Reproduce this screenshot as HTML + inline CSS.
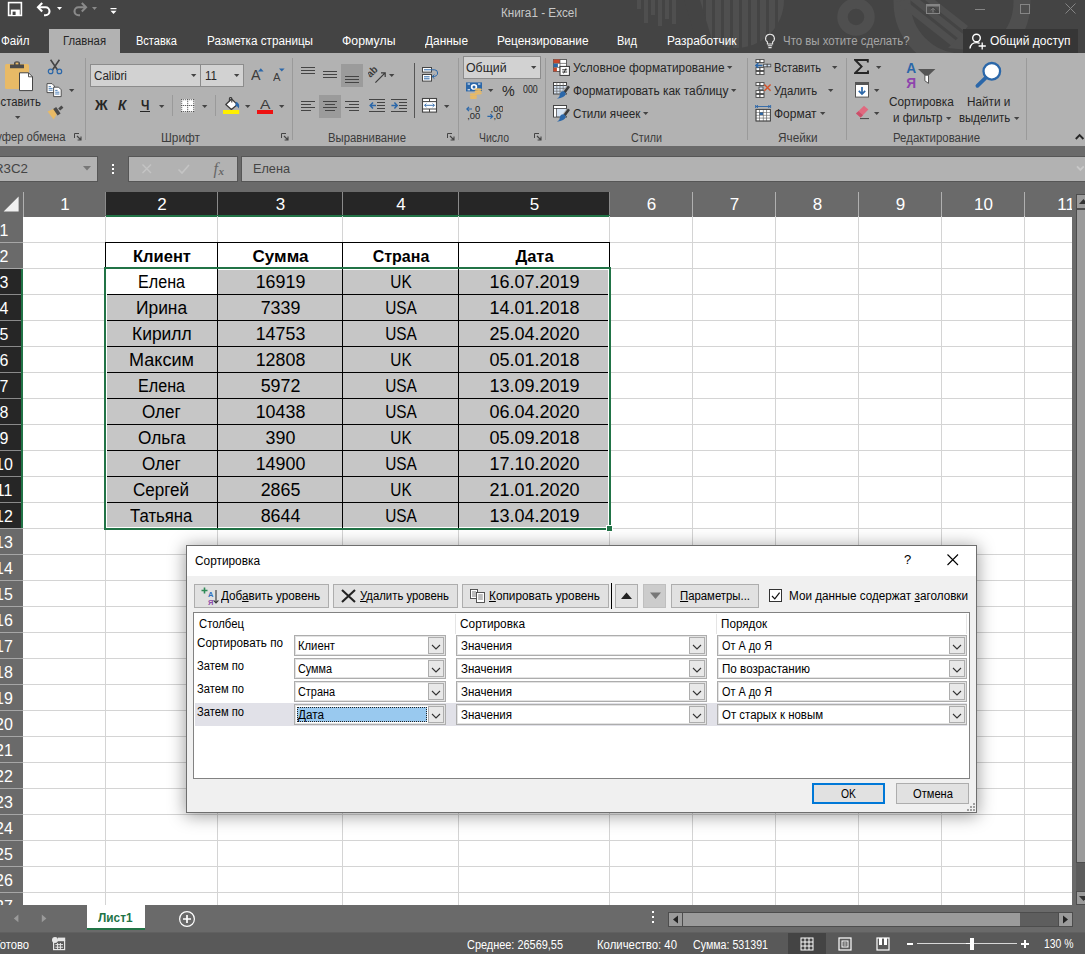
<!DOCTYPE html>
<html lang="ru"><head><meta charset="utf-8"><title>Книга1 - Excel</title>
<style>
html,body{margin:0;padding:0;}
body{width:1085px;height:954px;overflow:hidden;position:relative;background:#fff;font-family:"Liberation Sans",sans-serif;font-size:12px;}
#app{position:absolute;left:0;top:0;width:1085px;height:954px;overflow:hidden;}
#app div,#app span.t,#app svg{position:absolute;}
span.t{white-space:nowrap;display:block;}
u{text-decoration:underline;text-underline-offset:1px;}
</style></head><body><div id="app">
<div style="left:0px;top:0px;width:1085px;height:53px;background:#444444;"></div>
<svg style="left:0px;top:0px;" width="1085" height="53" viewBox="0 0 1085 53"><g fill="none" stroke="#4f4f4f">
<circle cx="856" cy="17" r="13.5" stroke-width="10.5"/>
<circle cx="962" cy="2" r="60" stroke-width="17"/>
</g>
<g fill="#4f4f4f">
<rect x="637" y="0" width="4" height="9"/><rect x="644" y="0" width="4" height="23"/><rect x="651" y="0" width="4" height="15"/><rect x="658" y="0" width="4" height="26"/><rect x="665" y="0" width="4" height="19"/><rect x="672" y="0" width="4" height="24"/>
<path d="M688 0 A48 48 0 0 0 784 0 Z"/>
<path d="M905 0 L958 42 L953 47 L896 2 Z M920 0 L963 34 L959 39 L910 0 Z M935 0 L968 26 L964 31 L925 0 Z"/>
<path d="M948 48 L966 30 L968 50 Z"/>
</g><rect x="694" y="0" width="3" height="53" fill="#444"/><rect x="703" y="0" width="3" height="53" fill="#444"/><rect x="712" y="0" width="3" height="53" fill="#444"/><rect x="721" y="0" width="3" height="53" fill="#444"/><rect x="730" y="0" width="3" height="53" fill="#444"/><rect x="739" y="0" width="3" height="53" fill="#444"/><rect x="748" y="0" width="3" height="53" fill="#444"/><rect x="757" y="0" width="3" height="53" fill="#444"/><rect x="766" y="0" width="3" height="53" fill="#444"/><rect x="775" y="0" width="3" height="53" fill="#444"/><path d="M684 0 L700 0 L716 53 L700 53 Z" fill="#444"/></svg>
<svg style="left:7px;top:1px;" width="16" height="16" viewBox="0 0 16 16"><rect x="1.6" y="1.6" width="12.8" height="12.8" fill="none" stroke="#fff" stroke-width="1.6"/><rect x="3.8" y="8.6" width="9" height="6" fill="#fff"/><rect x="5.6" y="10.6" width="3" height="3.4" fill="#444"/></svg>
<svg style="left:36px;top:2px;" width="20" height="16" viewBox="0 0 20 16"><path d="M2 5.2 H9.5 A4 4 0 0 1 9.5 13.2 H8" fill="none" stroke="#fff" stroke-width="2.1"/><path d="M6.2 1 L2 5.2 L6.2 9.4" fill="none" stroke="#fff" stroke-width="2.1"/></svg>
<svg style="left:57px;top:7px;" width="6" height="4" viewBox="0 0 6 4"><path d="M0 0 H5 L2.5 3 Z" fill="#fff"/></svg>
<svg style="left:70px;top:2px;" width="20" height="16" viewBox="0 0 20 16"><path d="M16 5.2 H8.5 A4 4 0 0 0 8.5 13.2 H10" fill="none" stroke="#8a8a8a" stroke-width="2.1"/><path d="M11.8 1 L16 5.2 L11.8 9.4" fill="none" stroke="#8a8a8a" stroke-width="2.1"/></svg>
<svg style="left:92px;top:7px;" width="6" height="4" viewBox="0 0 6 4"><path d="M0 0 H5 L2.5 3 Z" fill="#8a8a8a"/></svg>
<svg style="left:110px;top:7px;" width="8" height="8" viewBox="0 0 8 8"><rect x="0.5" y="1" width="6" height="1.2" fill="#fff"/><path d="M0.5 3.8 H6.5 L3.5 7 Z" fill="#fff"/></svg>
<span class="t" style="font-size:12px;color:#c8c8c8;left:501px;transform:scaleX(0.9770);transform-origin:0 50%;top:4.0px;line-height:18px;height:18px;">Книга1 - Excel</span>
<svg style="left:926px;top:4px;" width="15" height="11" viewBox="0 0 15 11"><rect x="0.5" y="0.5" width="13" height="9" fill="none" stroke="#858585"/><rect x="0.5" y="0.5" width="13" height="2" fill="#858585"/><path d="M7 8.5 V4.5 M5 6.3 L7 4.3 L9 6.3" stroke="#858585" fill="none"/></svg>
<div style="left:975px;top:9px;width:10px;height:1px;background:#858585;"></div>
<div style="left:1020px;top:4px;width:10px;height:10px;border:1px solid #858585;box-sizing:border-box;"></div>
<svg style="left:1065px;top:3px;" width="12" height="12" viewBox="0 0 12 12"><path d="M0.5 0.5 L10.5 10.5 M10.5 0.5 L0.5 10.5" stroke="#858585" stroke-width="1"/></svg>
<div style="left:49px;top:29px;width:71px;height:24px;background:#b2b2b2;"></div>
<span class="t" style="font-size:12px;color:#fff;left:1px;transform:scaleX(0.9660);transform-origin:0 50%;top:32.0px;line-height:18px;height:18px;">Файл</span>
<span class="t" style="font-size:12px;color:#262626;left:62.5px;transform:scaleX(0.9415);transform-origin:0 50%;top:32.0px;line-height:18px;height:18px;">Главная</span>
<span class="t" style="font-size:12px;color:#fff;left:135.5px;transform:scaleX(0.9193);transform-origin:0 50%;top:32.0px;line-height:18px;height:18px;">Вставка</span>
<span class="t" style="font-size:12px;color:#fff;left:206.5px;transform:scaleX(0.9737);transform-origin:0 50%;top:32.0px;line-height:18px;height:18px;">Разметка страницы</span>
<span class="t" style="font-size:12px;color:#fff;left:342px;transform:scaleX(1.0245);transform-origin:0 50%;top:32.0px;line-height:18px;height:18px;">Формулы</span>
<span class="t" style="font-size:12px;color:#fff;left:424.5px;transform:scaleX(0.9918);transform-origin:0 50%;top:32.0px;line-height:18px;height:18px;">Данные</span>
<span class="t" style="font-size:12px;color:#fff;left:496.5px;transform:scaleX(0.9875);transform-origin:0 50%;top:32.0px;line-height:18px;height:18px;">Рецензирование</span>
<span class="t" style="font-size:12px;color:#fff;left:617px;transform:scaleX(0.9213);transform-origin:0 50%;top:32.0px;line-height:18px;height:18px;">Вид</span>
<span class="t" style="font-size:12px;color:#fff;left:666.5px;transform:scaleX(0.9932);transform-origin:0 50%;top:32.0px;line-height:18px;height:18px;">Разработчик</span>
<svg style="left:764px;top:33px;" width="12" height="16" viewBox="0 0 12 16"><path d="M6 1.2 A4.3 4.3 0 0 1 8.6 9 V11 H3.4 V9 A4.3 4.3 0 0 1 6 1.2 Z" fill="none" stroke="#e6e6e6" stroke-width="1.1"/><path d="M3.8 12.8 H8.2 M4.4 14.6 H7.6" stroke="#e6e6e6" stroke-width="1.1"/></svg>
<span class="t" style="font-size:12px;color:#a6a6a6;left:782.5px;transform:scaleX(0.9536);transform-origin:0 50%;top:32.0px;line-height:18px;height:18px;">Что вы хотите сделать?</span>
<div style="left:963px;top:29px;width:115px;height:24px;background:#363636;"></div>
<svg style="left:969px;top:33px;" width="18" height="17" viewBox="0 0 18 17"><circle cx="7.5" cy="5" r="3.8" fill="none" stroke="#fff" stroke-width="1.4"/><path d="M1 15.5 C1.5 11 4 9.6 7.5 9.6 C9 9.6 10 9.9 10.6 10.3" fill="none" stroke="#fff" stroke-width="1.4"/><path d="M13.2 9.4 V16.6 M9.6 13 H16.8" stroke="#fff" stroke-width="1.3"/></svg>
<span class="t" style="font-size:12px;color:#fff;left:989.5px;transform:scaleX(0.9984);transform-origin:0 50%;top:32.0px;line-height:18px;height:18px;">Общий доступ</span>
<div style="left:0px;top:53px;width:1085px;height:93px;background:#b2b2b2;"></div>
<div style="left:0px;top:146px;width:1085px;height:46px;background:#6a6a6a;"></div>
<div style="left:85px;top:58px;width:1px;height:82px;background:#9a9a9a;"></div>
<div style="left:292px;top:58px;width:1px;height:82px;background:#9a9a9a;"></div>
<div style="left:458px;top:58px;width:1px;height:82px;background:#9a9a9a;"></div>
<div style="left:545px;top:58px;width:1px;height:82px;background:#9a9a9a;"></div>
<div style="left:747px;top:58px;width:1px;height:82px;background:#9a9a9a;"></div>
<div style="left:846px;top:58px;width:1px;height:82px;background:#9a9a9a;"></div>
<div style="left:1026px;top:58px;width:1px;height:82px;background:#9a9a9a;"></div>
<span class="t" style="font-size:12px;color:#3b3b3b;left:-16.34px;transform:scaleX(0.9388);transform-origin:100% 50%;top:128.4px;line-height:18px;height:18px;">Буфер обмена</span>
<span class="t" style="font-size:12px;color:#3b3b3b;left:161px;transform:scaleX(0.9878);transform-origin:0 50%;top:128.5px;line-height:18px;height:18px;">Шрифт</span>
<span class="t" style="font-size:12px;color:#3b3b3b;left:328px;transform:scaleX(0.9443);transform-origin:0 50%;top:128.5px;line-height:18px;height:18px;">Выравнивание</span>
<span class="t" style="font-size:12px;color:#3b3b3b;left:479px;transform:scaleX(0.8693);transform-origin:0 50%;top:128.5px;line-height:18px;height:18px;">Число</span>
<span class="t" style="font-size:12px;color:#3b3b3b;left:630.5px;transform:scaleX(0.8967);transform-origin:0 50%;top:128.5px;line-height:18px;height:18px;">Стили</span>
<span class="t" style="font-size:12px;color:#3b3b3b;left:777.5px;transform:scaleX(0.9814);transform-origin:0 50%;top:128.5px;line-height:18px;height:18px;">Ячейки</span>
<span class="t" style="font-size:12px;color:#3b3b3b;left:892.5px;transform:scaleX(0.9517);transform-origin:0 50%;top:128.5px;line-height:18px;height:18px;">Редактирование</span>
<svg style="left:74px;top:133px;" width="8" height="8" viewBox="0 0 8 8"><path d="M0.5 5 V0.5 H5" fill="none" stroke="#444" stroke-width="1"/><path d="M3 3 L7 7 M7 3.6 V7 H3.6" fill="none" stroke="#444" stroke-width="1.1"/></svg>
<svg style="left:281px;top:133px;" width="8" height="8" viewBox="0 0 8 8"><path d="M0.5 5 V0.5 H5" fill="none" stroke="#444" stroke-width="1"/><path d="M3 3 L7 7 M7 3.6 V7 H3.6" fill="none" stroke="#444" stroke-width="1.1"/></svg>
<svg style="left:447px;top:133px;" width="8" height="8" viewBox="0 0 8 8"><path d="M0.5 5 V0.5 H5" fill="none" stroke="#444" stroke-width="1"/><path d="M3 3 L7 7 M7 3.6 V7 H3.6" fill="none" stroke="#444" stroke-width="1.1"/></svg>
<svg style="left:534px;top:133px;" width="8" height="8" viewBox="0 0 8 8"><path d="M0.5 5 V0.5 H5" fill="none" stroke="#444" stroke-width="1"/><path d="M3 3 L7 7 M7 3.6 V7 H3.6" fill="none" stroke="#444" stroke-width="1.1"/></svg>
<svg style="left:1074px;top:133px;" width="12" height="8" viewBox="0 0 12 8"><path d="M1.8 6 L5.6 2.2 L9.4 6" fill="none" stroke="#262626" stroke-width="1.9"/></svg>
<div style="left:-2px;top:156px;width:100px;height:26px;background:#b2b2b2;border:1px solid #565656;box-sizing:border-box;"></div>
<span class="t" style="font-size:12px;color:#444;left:-6px;transform:scaleX(1.1082);transform-origin:0 50%;top:160.0px;line-height:18px;height:18px;">R3C2</span>
<svg style="left:83px;top:166px;" width="9" height="5" viewBox="0 0 9 5"><path d="M0 0 H8 L4 4.5 Z" fill="#777"/></svg>
<div style="left:112px;top:164px;width:2px;height:2px;background:#fff;"></div>
<div style="left:112px;top:168px;width:2px;height:2px;background:#fff;"></div>
<div style="left:112px;top:172px;width:2px;height:2px;background:#fff;"></div>
<div style="left:128px;top:156px;width:110px;height:26px;background:#b2b2b2;border:1px solid #565656;box-sizing:border-box;"></div>
<svg style="left:141px;top:163px;" width="12" height="12" viewBox="0 0 12 12"><path d="M1.5 1.5 L10 10 M10 1.5 L1.5 10" stroke="#c4c4c4" stroke-width="1.4"/></svg>
<svg style="left:177px;top:163px;" width="14" height="12" viewBox="0 0 14 12"><path d="M1.5 6.5 L5 10 L12 2" fill="none" stroke="#c4c4c4" stroke-width="1.6"/></svg>
<span class="t" style="font-size:16px;color:#666;font-style:italic;left:213.5px;top:156.6px;line-height:24px;height:24px;font-family:'Liberation Serif',serif;">f</span>
<span class="t" style="font-size:11px;color:#666;font-style:italic;left:218.6px;top:163.4px;line-height:16px;height:16px;font-family:'Liberation Serif',serif;font-weight:bold;">x</span>
<div style="left:241px;top:156px;width:850px;height:26px;background:#b2b2b2;border:1px solid #565656;box-sizing:border-box;"></div>
<span class="t" style="font-size:13px;color:#444;left:253px;transform:scaleX(0.9764);transform-origin:0 50%;top:159.0px;line-height:20px;height:20px;">Елена</span>
<svg style="left:1075px;top:165px;" width="12" height="8" viewBox="0 0 12 8"><path d="M2 1.4 L5.4 4.8 L8.8 1.4" fill="none" stroke="#c8c8c8" stroke-width="1.9"/></svg>
<div style="left:0px;top:192px;width:1085px;height:713px;background:#fff;"></div>
<div style="left:0px;top:192px;width:1076px;height:25px;background:#6a6a6a;"></div>
<div style="left:106px;top:192px;width:504px;height:25px;background:#262626;"></div>
<div style="left:106px;top:215px;width:504px;height:2px;background:#217346;"></div>
<span class="t" style="font-size:17px;color:#fff;left:24px;width:82px;text-align:center;top:191.5px;line-height:26px;height:26px;">1</span>
<span class="t" style="font-size:17px;color:#fff;left:106px;width:112px;text-align:center;top:191.5px;line-height:26px;height:26px;">2</span>
<span class="t" style="font-size:17px;color:#fff;left:218px;width:125px;text-align:center;top:191.5px;line-height:26px;height:26px;">3</span>
<span class="t" style="font-size:17px;color:#fff;left:343px;width:116px;text-align:center;top:191.5px;line-height:26px;height:26px;">4</span>
<span class="t" style="font-size:17px;color:#fff;left:459px;width:151px;text-align:center;top:191.5px;line-height:26px;height:26px;">5</span>
<span class="t" style="font-size:17px;color:#fff;left:610px;width:83px;text-align:center;top:191.5px;line-height:26px;height:26px;">6</span>
<span class="t" style="font-size:17px;color:#fff;left:693px;width:83px;text-align:center;top:191.5px;line-height:26px;height:26px;">7</span>
<span class="t" style="font-size:17px;color:#fff;left:776px;width:83px;text-align:center;top:191.5px;line-height:26px;height:26px;">8</span>
<span class="t" style="font-size:17px;color:#fff;left:859px;width:83px;text-align:center;top:191.5px;line-height:26px;height:26px;">9</span>
<span class="t" style="font-size:17px;color:#fff;left:942px;width:83px;text-align:center;top:191.5px;line-height:26px;height:26px;">10</span>
<span class="t" style="font-size:17px;color:#fff;left:1024px;width:51px;text-align:right;top:191.5px;line-height:26px;height:26px;">11</span>
<div style="left:23px;top:192px;width:1px;height:25px;background:#b0b0b0;"></div>
<div style="left:105px;top:192px;width:1px;height:23px;background:#8a8a8a;"></div>
<div style="left:217px;top:192px;width:1px;height:23px;background:#8a8a8a;"></div>
<div style="left:342px;top:192px;width:1px;height:23px;background:#8a8a8a;"></div>
<div style="left:458px;top:192px;width:1px;height:23px;background:#8a8a8a;"></div>
<div style="left:609px;top:192px;width:1px;height:23px;background:#8a8a8a;"></div>
<div style="left:692px;top:192px;width:1px;height:25px;background:#b0b0b0;"></div>
<div style="left:775px;top:192px;width:1px;height:25px;background:#b0b0b0;"></div>
<div style="left:858px;top:192px;width:1px;height:25px;background:#b0b0b0;"></div>
<div style="left:941px;top:192px;width:1px;height:25px;background:#b0b0b0;"></div>
<div style="left:1024px;top:192px;width:1px;height:25px;background:#b0b0b0;"></div>
<svg style="left:3px;top:196px;" width="18" height="18" viewBox="0 0 18 18"><path d="M15.6 0.6 V15.6 H0.6 Z" fill="#f0f0f0"/></svg>
<div style="left:0px;top:216px;width:23px;height:689px;background:#6a6a6a;"></div>
<div style="left:0px;top:269px;width:21px;height:260px;background:#262626;"></div>
<div style="left:21px;top:269px;width:2px;height:260px;background:#217346;"></div>
<span class="t" style="font-size:17px;color:#fff;left:-45.6px;width:100.0px;text-align:center;top:217.5px;line-height:26px;height:26px;transform:scaleX(0.94);">1</span>
<span class="t" style="font-size:17px;color:#fff;left:-45.6px;width:100.0px;text-align:center;top:243.5px;line-height:26px;height:26px;transform:scaleX(0.94);">2</span>
<div style="left:0px;top:242px;width:23px;height:1px;background:#a6a6a6;"></div>
<span class="t" style="font-size:17px;color:#fff;left:-45.6px;width:100.0px;text-align:center;top:269.5px;line-height:26px;height:26px;transform:scaleX(0.94);">3</span>
<div style="left:0px;top:268px;width:23px;height:1px;background:#a6a6a6;"></div>
<span class="t" style="font-size:17px;color:#fff;left:-45.6px;width:100.0px;text-align:center;top:295.5px;line-height:26px;height:26px;transform:scaleX(0.94);">4</span>
<div style="left:0px;top:294px;width:21px;height:1px;background:#8a8a8a;"></div>
<span class="t" style="font-size:17px;color:#fff;left:-45.6px;width:100.0px;text-align:center;top:321.5px;line-height:26px;height:26px;transform:scaleX(0.94);">5</span>
<div style="left:0px;top:320px;width:21px;height:1px;background:#8a8a8a;"></div>
<span class="t" style="font-size:17px;color:#fff;left:-45.6px;width:100.0px;text-align:center;top:347.5px;line-height:26px;height:26px;transform:scaleX(0.94);">6</span>
<div style="left:0px;top:346px;width:21px;height:1px;background:#8a8a8a;"></div>
<span class="t" style="font-size:17px;color:#fff;left:-45.6px;width:100.0px;text-align:center;top:373.5px;line-height:26px;height:26px;transform:scaleX(0.94);">7</span>
<div style="left:0px;top:372px;width:21px;height:1px;background:#8a8a8a;"></div>
<span class="t" style="font-size:17px;color:#fff;left:-45.6px;width:100.0px;text-align:center;top:399.5px;line-height:26px;height:26px;transform:scaleX(0.94);">8</span>
<div style="left:0px;top:398px;width:21px;height:1px;background:#8a8a8a;"></div>
<span class="t" style="font-size:17px;color:#fff;left:-45.6px;width:100.0px;text-align:center;top:425.5px;line-height:26px;height:26px;transform:scaleX(0.94);">9</span>
<div style="left:0px;top:424px;width:21px;height:1px;background:#8a8a8a;"></div>
<span class="t" style="font-size:17px;color:#fff;left:-45.6px;width:100.0px;text-align:center;top:451.5px;line-height:26px;height:26px;transform:scaleX(0.94);">10</span>
<div style="left:0px;top:450px;width:21px;height:1px;background:#8a8a8a;"></div>
<span class="t" style="font-size:17px;color:#fff;left:-45.6px;width:100.0px;text-align:center;top:477.5px;line-height:26px;height:26px;transform:scaleX(0.94);">11</span>
<div style="left:0px;top:476px;width:21px;height:1px;background:#8a8a8a;"></div>
<span class="t" style="font-size:17px;color:#fff;left:-45.6px;width:100.0px;text-align:center;top:503.5px;line-height:26px;height:26px;transform:scaleX(0.94);">12</span>
<div style="left:0px;top:502px;width:21px;height:1px;background:#8a8a8a;"></div>
<span class="t" style="font-size:17px;color:#fff;left:-45.6px;width:100.0px;text-align:center;top:529.5px;line-height:26px;height:26px;transform:scaleX(0.94);">13</span>
<div style="left:0px;top:528px;width:23px;height:1px;background:#a6a6a6;"></div>
<span class="t" style="font-size:17px;color:#fff;left:-45.6px;width:100.0px;text-align:center;top:555.5px;line-height:26px;height:26px;transform:scaleX(0.94);">14</span>
<div style="left:0px;top:554px;width:23px;height:1px;background:#a6a6a6;"></div>
<span class="t" style="font-size:17px;color:#fff;left:-45.6px;width:100.0px;text-align:center;top:581.5px;line-height:26px;height:26px;transform:scaleX(0.94);">15</span>
<div style="left:0px;top:580px;width:23px;height:1px;background:#a6a6a6;"></div>
<span class="t" style="font-size:17px;color:#fff;left:-45.6px;width:100.0px;text-align:center;top:607.5px;line-height:26px;height:26px;transform:scaleX(0.94);">16</span>
<div style="left:0px;top:606px;width:23px;height:1px;background:#a6a6a6;"></div>
<span class="t" style="font-size:17px;color:#fff;left:-45.6px;width:100.0px;text-align:center;top:633.5px;line-height:26px;height:26px;transform:scaleX(0.94);">17</span>
<div style="left:0px;top:632px;width:23px;height:1px;background:#a6a6a6;"></div>
<span class="t" style="font-size:17px;color:#fff;left:-45.6px;width:100.0px;text-align:center;top:659.5px;line-height:26px;height:26px;transform:scaleX(0.94);">18</span>
<div style="left:0px;top:658px;width:23px;height:1px;background:#a6a6a6;"></div>
<span class="t" style="font-size:17px;color:#fff;left:-45.6px;width:100.0px;text-align:center;top:685.5px;line-height:26px;height:26px;transform:scaleX(0.94);">19</span>
<div style="left:0px;top:684px;width:23px;height:1px;background:#a6a6a6;"></div>
<span class="t" style="font-size:17px;color:#fff;left:-45.6px;width:100.0px;text-align:center;top:711.5px;line-height:26px;height:26px;transform:scaleX(0.94);">20</span>
<div style="left:0px;top:710px;width:23px;height:1px;background:#a6a6a6;"></div>
<span class="t" style="font-size:17px;color:#fff;left:-45.6px;width:100.0px;text-align:center;top:737.5px;line-height:26px;height:26px;transform:scaleX(0.94);">21</span>
<div style="left:0px;top:736px;width:23px;height:1px;background:#a6a6a6;"></div>
<span class="t" style="font-size:17px;color:#fff;left:-45.6px;width:100.0px;text-align:center;top:763.5px;line-height:26px;height:26px;transform:scaleX(0.94);">22</span>
<div style="left:0px;top:762px;width:23px;height:1px;background:#a6a6a6;"></div>
<span class="t" style="font-size:17px;color:#fff;left:-45.6px;width:100.0px;text-align:center;top:789.5px;line-height:26px;height:26px;transform:scaleX(0.94);">23</span>
<div style="left:0px;top:788px;width:23px;height:1px;background:#a6a6a6;"></div>
<span class="t" style="font-size:17px;color:#fff;left:-45.6px;width:100.0px;text-align:center;top:815.5px;line-height:26px;height:26px;transform:scaleX(0.94);">24</span>
<div style="left:0px;top:814px;width:23px;height:1px;background:#a6a6a6;"></div>
<span class="t" style="font-size:17px;color:#fff;left:-45.6px;width:100.0px;text-align:center;top:841.5px;line-height:26px;height:26px;transform:scaleX(0.94);">25</span>
<div style="left:0px;top:840px;width:23px;height:1px;background:#a6a6a6;"></div>
<span class="t" style="font-size:17px;color:#fff;left:-45.6px;width:100.0px;text-align:center;top:867.5px;line-height:26px;height:26px;transform:scaleX(0.94);">26</span>
<div style="left:0px;top:866px;width:23px;height:1px;background:#a6a6a6;"></div>
<span class="t" style="font-size:17px;color:#fff;left:-45.6px;width:100.0px;text-align:center;top:893.5px;line-height:26px;height:26px;transform:scaleX(0.94);">27</span>
<div style="left:0px;top:892px;width:23px;height:1px;background:#a6a6a6;"></div>
<div style="left:105px;top:216px;width:1px;height:689px;background:#d4d4d4;"></div>
<div style="left:217px;top:216px;width:1px;height:689px;background:#d4d4d4;"></div>
<div style="left:342px;top:216px;width:1px;height:689px;background:#d4d4d4;"></div>
<div style="left:458px;top:216px;width:1px;height:689px;background:#d4d4d4;"></div>
<div style="left:609px;top:216px;width:1px;height:689px;background:#d4d4d4;"></div>
<div style="left:692px;top:216px;width:1px;height:689px;background:#d4d4d4;"></div>
<div style="left:775px;top:216px;width:1px;height:689px;background:#d4d4d4;"></div>
<div style="left:858px;top:216px;width:1px;height:689px;background:#d4d4d4;"></div>
<div style="left:941px;top:216px;width:1px;height:689px;background:#d4d4d4;"></div>
<div style="left:1024px;top:216px;width:1px;height:689px;background:#d4d4d4;"></div>
<div style="left:23px;top:242px;width:1049px;height:1px;background:#d4d4d4;"></div>
<div style="left:23px;top:268px;width:1049px;height:1px;background:#d4d4d4;"></div>
<div style="left:23px;top:294px;width:1049px;height:1px;background:#d4d4d4;"></div>
<div style="left:23px;top:320px;width:1049px;height:1px;background:#d4d4d4;"></div>
<div style="left:23px;top:346px;width:1049px;height:1px;background:#d4d4d4;"></div>
<div style="left:23px;top:372px;width:1049px;height:1px;background:#d4d4d4;"></div>
<div style="left:23px;top:398px;width:1049px;height:1px;background:#d4d4d4;"></div>
<div style="left:23px;top:424px;width:1049px;height:1px;background:#d4d4d4;"></div>
<div style="left:23px;top:450px;width:1049px;height:1px;background:#d4d4d4;"></div>
<div style="left:23px;top:476px;width:1049px;height:1px;background:#d4d4d4;"></div>
<div style="left:23px;top:502px;width:1049px;height:1px;background:#d4d4d4;"></div>
<div style="left:23px;top:528px;width:1049px;height:1px;background:#d4d4d4;"></div>
<div style="left:23px;top:554px;width:1049px;height:1px;background:#d4d4d4;"></div>
<div style="left:23px;top:580px;width:1049px;height:1px;background:#d4d4d4;"></div>
<div style="left:23px;top:606px;width:1049px;height:1px;background:#d4d4d4;"></div>
<div style="left:23px;top:632px;width:1049px;height:1px;background:#d4d4d4;"></div>
<div style="left:23px;top:658px;width:1049px;height:1px;background:#d4d4d4;"></div>
<div style="left:23px;top:684px;width:1049px;height:1px;background:#d4d4d4;"></div>
<div style="left:23px;top:710px;width:1049px;height:1px;background:#d4d4d4;"></div>
<div style="left:23px;top:736px;width:1049px;height:1px;background:#d4d4d4;"></div>
<div style="left:23px;top:762px;width:1049px;height:1px;background:#d4d4d4;"></div>
<div style="left:23px;top:788px;width:1049px;height:1px;background:#d4d4d4;"></div>
<div style="left:23px;top:814px;width:1049px;height:1px;background:#d4d4d4;"></div>
<div style="left:23px;top:840px;width:1049px;height:1px;background:#d4d4d4;"></div>
<div style="left:23px;top:866px;width:1049px;height:1px;background:#d4d4d4;"></div>
<div style="left:23px;top:892px;width:1049px;height:1px;background:#d4d4d4;"></div>
<div style="left:23px;top:918px;width:1049px;height:1px;background:#d4d4d4;"></div>
<div style="left:105px;top:242px;width:505px;height:1px;background:#000;"></div>
<div style="left:105px;top:242px;width:1px;height:26px;background:#000;"></div>
<div style="left:217px;top:242px;width:1px;height:26px;background:#000;"></div>
<div style="left:342px;top:242px;width:1px;height:26px;background:#000;"></div>
<div style="left:458px;top:242px;width:1px;height:26px;background:#000;"></div>
<div style="left:609px;top:242px;width:1px;height:26px;background:#000;"></div>
<div style="left:104px;top:267px;width:507px;height:263px;background:#fff;border:2px solid #217346;box-sizing:border-box;"></div>
<div style="left:107px;top:270px;width:501px;height:257px;background:#c6c6c6;"></div>
<div style="left:107px;top:270px;width:110px;height:24px;background:#fff;"></div>
<div style="left:217px;top:269px;width:1px;height:259px;background:#000;"></div>
<div style="left:342px;top:269px;width:1px;height:259px;background:#000;"></div>
<div style="left:458px;top:269px;width:1px;height:259px;background:#000;"></div>
<div style="left:107px;top:294px;width:501px;height:1px;background:#000;"></div>
<div style="left:107px;top:320px;width:501px;height:1px;background:#000;"></div>
<div style="left:107px;top:346px;width:501px;height:1px;background:#000;"></div>
<div style="left:107px;top:372px;width:501px;height:1px;background:#000;"></div>
<div style="left:107px;top:398px;width:501px;height:1px;background:#000;"></div>
<div style="left:107px;top:424px;width:501px;height:1px;background:#000;"></div>
<div style="left:107px;top:450px;width:501px;height:1px;background:#000;"></div>
<div style="left:107px;top:476px;width:501px;height:1px;background:#000;"></div>
<div style="left:107px;top:502px;width:501px;height:1px;background:#000;"></div>
<div style="left:606px;top:525px;width:7px;height:7px;background:#217346;border:1px solid #fff;box-sizing:border-box;"></div>
<span class="t" style="font-size:17px;color:#000;font-weight:bold;left:106px;width:112px;text-align:center;top:243.5px;line-height:26px;height:26px;transform:scaleX(0.97);">Клиент</span>
<span class="t" style="font-size:17px;color:#000;font-weight:bold;left:218px;width:125px;text-align:center;top:243.5px;line-height:26px;height:26px;transform:scaleX(1.0);">Сумма</span>
<span class="t" style="font-size:17px;color:#000;font-weight:bold;left:343px;width:116px;text-align:center;top:243.5px;line-height:26px;height:26px;transform:scaleX(0.94);">Страна</span>
<span class="t" style="font-size:17px;color:#000;font-weight:bold;left:459px;width:151px;text-align:center;top:243.5px;line-height:26px;height:26px;transform:scaleX(0.97);">Дата</span>
<span class="t" style="font-size:17.5px;color:#000;left:138.0px;transform:scaleX(0.9213);transform-origin:0 50%;top:269.2px;line-height:26px;height:26px;">Елена</span>
<span class="t" style="font-size:17.5px;color:#000;left:218px;width:125px;text-align:center;top:269.2px;line-height:26px;height:26px;transform:scaleX(1.02);">16919</span>
<span class="t" style="font-size:17.5px;color:#000;left:343px;width:116px;text-align:center;top:269.2px;line-height:26px;height:26px;transform:scaleX(0.88);">UK</span>
<span class="t" style="font-size:17.5px;color:#000;left:459px;width:151px;text-align:center;top:269.2px;line-height:26px;height:26px;transform:scaleX(1.03);">16.07.2019</span>
<span class="t" style="font-size:17.5px;color:#000;left:135.95px;transform:scaleX(0.9926);transform-origin:0 50%;top:295.2px;line-height:26px;height:26px;">Ирина</span>
<span class="t" style="font-size:17.5px;color:#000;left:218px;width:125px;text-align:center;top:295.2px;line-height:26px;height:26px;transform:scaleX(1.02);">7339</span>
<span class="t" style="font-size:17.5px;color:#000;left:343px;width:116px;text-align:center;top:295.2px;line-height:26px;height:26px;transform:scaleX(0.88);">USA</span>
<span class="t" style="font-size:17.5px;color:#000;left:459px;width:151px;text-align:center;top:295.2px;line-height:26px;height:26px;transform:scaleX(1.03);">14.01.2018</span>
<span class="t" style="font-size:17.5px;color:#000;left:131.65px;transform:scaleX(0.9967);transform-origin:0 50%;top:321.2px;line-height:26px;height:26px;">Кирилл</span>
<span class="t" style="font-size:17.5px;color:#000;left:218px;width:125px;text-align:center;top:321.2px;line-height:26px;height:26px;transform:scaleX(1.02);">14753</span>
<span class="t" style="font-size:17.5px;color:#000;left:343px;width:116px;text-align:center;top:321.2px;line-height:26px;height:26px;transform:scaleX(0.88);">USA</span>
<span class="t" style="font-size:17.5px;color:#000;left:459px;width:151px;text-align:center;top:321.2px;line-height:26px;height:26px;transform:scaleX(1.03);">25.04.2020</span>
<span class="t" style="font-size:17.5px;color:#000;left:129.04999999999998px;transform:scaleX(1.0315);transform-origin:0 50%;top:347.2px;line-height:26px;height:26px;">Максим</span>
<span class="t" style="font-size:17.5px;color:#000;left:218px;width:125px;text-align:center;top:347.2px;line-height:26px;height:26px;transform:scaleX(1.02);">12808</span>
<span class="t" style="font-size:17.5px;color:#000;left:343px;width:116px;text-align:center;top:347.2px;line-height:26px;height:26px;transform:scaleX(0.88);">UK</span>
<span class="t" style="font-size:17.5px;color:#000;left:459px;width:151px;text-align:center;top:347.2px;line-height:26px;height:26px;transform:scaleX(1.03);">05.01.2018</span>
<span class="t" style="font-size:17.5px;color:#000;left:138.0px;transform:scaleX(0.9213);transform-origin:0 50%;top:373.2px;line-height:26px;height:26px;">Елена</span>
<span class="t" style="font-size:17.5px;color:#000;left:218px;width:125px;text-align:center;top:373.2px;line-height:26px;height:26px;transform:scaleX(1.02);">5972</span>
<span class="t" style="font-size:17.5px;color:#000;left:343px;width:116px;text-align:center;top:373.2px;line-height:26px;height:26px;transform:scaleX(0.88);">USA</span>
<span class="t" style="font-size:17.5px;color:#000;left:459px;width:151px;text-align:center;top:373.2px;line-height:26px;height:26px;transform:scaleX(1.03);">13.09.2019</span>
<span class="t" style="font-size:17.5px;color:#000;left:142.1px;transform:scaleX(0.9763);transform-origin:0 50%;top:399.2px;line-height:26px;height:26px;">Олег</span>
<span class="t" style="font-size:17.5px;color:#000;left:218px;width:125px;text-align:center;top:399.2px;line-height:26px;height:26px;transform:scaleX(1.02);">10438</span>
<span class="t" style="font-size:17.5px;color:#000;left:343px;width:116px;text-align:center;top:399.2px;line-height:26px;height:26px;transform:scaleX(0.88);">USA</span>
<span class="t" style="font-size:17.5px;color:#000;left:459px;width:151px;text-align:center;top:399.2px;line-height:26px;height:26px;transform:scaleX(1.03);">06.04.2020</span>
<span class="t" style="font-size:17.5px;color:#000;left:137.7px;transform:scaleX(0.9819);transform-origin:0 50%;top:425.2px;line-height:26px;height:26px;">Ольга</span>
<span class="t" style="font-size:17.5px;color:#000;left:218px;width:125px;text-align:center;top:425.2px;line-height:26px;height:26px;transform:scaleX(1.02);">390</span>
<span class="t" style="font-size:17.5px;color:#000;left:343px;width:116px;text-align:center;top:425.2px;line-height:26px;height:26px;transform:scaleX(0.88);">UK</span>
<span class="t" style="font-size:17.5px;color:#000;left:459px;width:151px;text-align:center;top:425.2px;line-height:26px;height:26px;transform:scaleX(1.03);">05.09.2018</span>
<span class="t" style="font-size:17.5px;color:#000;left:142.1px;transform:scaleX(0.9763);transform-origin:0 50%;top:451.2px;line-height:26px;height:26px;">Олег</span>
<span class="t" style="font-size:17.5px;color:#000;left:218px;width:125px;text-align:center;top:451.2px;line-height:26px;height:26px;transform:scaleX(1.02);">14900</span>
<span class="t" style="font-size:17.5px;color:#000;left:343px;width:116px;text-align:center;top:451.2px;line-height:26px;height:26px;transform:scaleX(0.88);">USA</span>
<span class="t" style="font-size:17.5px;color:#000;left:459px;width:151px;text-align:center;top:451.2px;line-height:26px;height:26px;transform:scaleX(1.03);">17.10.2020</span>
<span class="t" style="font-size:17.5px;color:#000;left:133.45px;transform:scaleX(0.9738);transform-origin:0 50%;top:477.2px;line-height:26px;height:26px;">Сергей</span>
<span class="t" style="font-size:17.5px;color:#000;left:218px;width:125px;text-align:center;top:477.2px;line-height:26px;height:26px;transform:scaleX(1.02);">2865</span>
<span class="t" style="font-size:17.5px;color:#000;left:343px;width:116px;text-align:center;top:477.2px;line-height:26px;height:26px;transform:scaleX(0.88);">UK</span>
<span class="t" style="font-size:17.5px;color:#000;left:459px;width:151px;text-align:center;top:477.2px;line-height:26px;height:26px;transform:scaleX(1.03);">21.01.2020</span>
<span class="t" style="font-size:17.5px;color:#000;left:130.29999999999998px;transform:scaleX(0.9562);transform-origin:0 50%;top:503.2px;line-height:26px;height:26px;">Татьяна</span>
<span class="t" style="font-size:17.5px;color:#000;left:218px;width:125px;text-align:center;top:503.2px;line-height:26px;height:26px;transform:scaleX(1.02);">8644</span>
<span class="t" style="font-size:17.5px;color:#000;left:343px;width:116px;text-align:center;top:503.2px;line-height:26px;height:26px;transform:scaleX(0.88);">USA</span>
<span class="t" style="font-size:17.5px;color:#000;left:459px;width:151px;text-align:center;top:503.2px;line-height:26px;height:26px;transform:scaleX(1.03);">13.04.2019</span>
<div style="left:1072px;top:192px;width:13px;height:713px;background:#6a6a6a;"></div>
<div style="left:1076px;top:194px;width:10px;height:15px;background:#9b9b9b;border:1px solid #4d4d4d;box-sizing:border-box;"></div>
<svg style="left:1079px;top:198px;" width="8" height="7" viewBox="0 0 8 7"><path d="M0 6 L4.5 1 L9 6 Z" fill="#333"/></svg>
<div style="left:1076px;top:209px;width:10px;height:654px;background:#9b9b9b;border:1px solid #4d4d4d;box-sizing:border-box;"></div>
<div style="left:1076px;top:863px;width:10px;height:28px;background:#5c5c5c;"></div>
<div style="left:1076px;top:891px;width:10px;height:14px;background:#9b9b9b;border:1px solid #4d4d4d;box-sizing:border-box;"></div>
<svg style="left:1079px;top:895px;" width="8" height="7" viewBox="0 0 8 7"><path d="M0 1 L4.5 6 L9 1 Z" fill="#333"/></svg>
<div style="left:0px;top:905px;width:1085px;height:28px;background:#6a6a6a;"></div>
<div style="left:0px;top:932px;width:1085px;height:1px;background:#606060;"></div>
<div style="left:0px;top:933px;width:1085px;height:21px;background:#595959;"></div>
<svg style="left:13px;top:914px;" width="7" height="9" viewBox="0 0 7 9"><path d="M5.4 0.6 L0.8 4.4 L5.4 8.2 Z" fill="#9a9a9a"/></svg>
<svg style="left:41px;top:914px;" width="7" height="9" viewBox="0 0 7 9"><path d="M0.8 0.6 L5.4 4.4 L0.8 8.2 Z" fill="#9a9a9a"/></svg>
<div style="left:87px;top:905px;width:58px;height:25px;background:#fff;"></div>
<div style="left:87px;top:928px;width:58px;height:2px;background:#217346;"></div>
<span class="t" style="font-size:13px;color:#217346;font-weight:bold;left:98.4px;transform:scaleX(0.9093);transform-origin:0 50%;top:908.2px;line-height:20px;height:20px;">Лист1</span>
<svg style="left:178px;top:910px;" width="18" height="18" viewBox="0 0 18 18"><circle cx="9" cy="9" r="7.4" fill="none" stroke="#fff" stroke-width="1.2"/><path d="M9 5 V13 M5 9 H13" stroke="#fff" stroke-width="1.7"/></svg>
<div style="left:652px;top:911px;width:2px;height:2px;background:#fff;"></div>
<div style="left:652px;top:916px;width:2px;height:2px;background:#fff;"></div>
<div style="left:652px;top:921px;width:2px;height:2px;background:#fff;"></div>
<div style="left:668px;top:912px;width:405px;height:15px;background:#9b9b9b;border:1px solid #4d4d4d;box-sizing:border-box;"></div>
<div style="left:668px;top:912px;width:15px;height:15px;background:#9b9b9b;border:1px solid #4d4d4d;box-sizing:border-box;"></div>
<div style="left:1020px;top:913px;width:39px;height:13px;background:#5e5e5e;"></div>
<div style="left:1058px;top:912px;width:15px;height:15px;background:#9b9b9b;border:1px solid #4d4d4d;box-sizing:border-box;"></div>
<svg style="left:672px;top:915px;" width="8" height="9" viewBox="0 0 8 9"><path d="M6 0.5 L1 4.5 L6 8.5 Z" fill="#222"/></svg>
<svg style="left:1062px;top:915px;" width="8" height="9" viewBox="0 0 8 9"><path d="M1 0.5 L6 4.5 L1 8.5 Z" fill="#222"/></svg>
<span class="t" style="font-size:12px;color:#fff;left:-7.65px;transform:scaleX(0.9375);transform-origin:100% 50%;top:935.8px;line-height:18px;height:18px;">Готово</span>
<svg style="left:52px;top:937px;" width="14" height="14" viewBox="0 0 14 14"><rect x="1.6" y="3.6" width="11" height="9" fill="none" stroke="#e6e6e6" stroke-width="1.2"/><circle cx="3" cy="3" r="3" fill="#e6e6e6"/><rect x="6" y="0.6" width="7.2" height="3" fill="#e6e6e6"/><path d="M3.4 7.6 H11 M3.4 10.2 H11 M5.6 6 V12 M8.4 6 V12" stroke="#e6e6e6" stroke-width="1"/></svg>
<span class="t" style="font-size:12px;color:#fff;left:467px;transform:scaleX(0.9104);transform-origin:0 50%;top:935.6px;line-height:18px;height:18px;">Среднее: 26569,55</span>
<span class="t" style="font-size:12px;color:#fff;left:597px;transform:scaleX(0.9472);transform-origin:0 50%;top:935.6px;line-height:18px;height:18px;">Количество: 40</span>
<span class="t" style="font-size:12px;color:#fff;left:693px;transform:scaleX(0.8885);transform-origin:0 50%;top:935.6px;line-height:18px;height:18px;">Сумма: 531391</span>
<div style="left:788px;top:933px;width:38px;height:21px;background:#444444;"></div>
<svg style="left:799.5px;top:936.5px;" width="15" height="15" viewBox="0 0 15 15"><rect x="1" y="1" width="12" height="12" fill="none" stroke="#fff" stroke-width="1"/><path d="M5 1 V13 M9 1 V13 M1 5 H13 M1 9 H13" stroke="#fff" stroke-width="1"/></svg>
<svg style="left:838px;top:936.5px;" width="15" height="15" viewBox="0 0 15 15"><rect x="1" y="1" width="12" height="12" fill="none" stroke="#fff" stroke-width="1.2"/><rect x="4" y="4" width="6" height="6" fill="none" stroke="#fff" stroke-width="1"/><path d="M5.5 6 H8.5 M5.5 8 H8.5" stroke="#fff" stroke-width=".8"/></svg>
<svg style="left:876px;top:936.5px;" width="15" height="15" viewBox="0 0 15 15"><rect x="1" y="1" width="12" height="12" fill="none" stroke="#fff" stroke-width="1.2"/><rect x="3" y="1" width="3" height="7" fill="#fff"/><rect x="8" y="1" width="3" height="7" fill="#fff"/></svg>
<div style="left:907px;top:943px;width:6px;height:2px;background:#fff;"></div>
<div style="left:917px;top:943px;width:100px;height:1px;background:#d8d8d8;"></div>
<div style="left:966px;top:943px;width:4px;height:1px;background:#fff;"></div>
<div style="left:970px;top:938px;width:4px;height:12px;background:#fff;"></div>
<div style="left:1021px;top:943px;width:8px;height:2px;background:#fff;"></div>
<div style="left:1024px;top:940px;width:2px;height:8px;background:#fff;"></div>
<span class="t" style="font-size:12px;color:#fff;left:1044.3px;transform:scaleX(0.8670);transform-origin:0 50%;top:935.4px;line-height:18px;height:18px;">130 %</span>
<div style="left:186px;top:545px;width:791px;height:268px;background:#f0f0f0;border:1px solid #6e6e6e;box-sizing:border-box;box-shadow:0 2px 16px 1px rgba(0,0,0,0.38);"></div>
<div style="left:187px;top:546px;width:789px;height:30px;background:#fff;"></div>
<span class="t" style="font-size:12px;color:#000;left:195px;transform:scaleX(0.9870);transform-origin:0 50%;top:552.0px;line-height:18px;height:18px;">Сортировка</span>
<span class="t" style="font-size:13px;color:#000;left:904px;top:550.0px;line-height:20px;height:20px;">?</span>
<svg style="left:947px;top:554px;" width="12" height="12" viewBox="0 0 12 12"><path d="M0.5 0.5 L11 11 M11 0.5 L0.5 11" stroke="#000" stroke-width="1.1"/></svg>
<div style="left:194px;top:584px;width:135px;height:24px;background:#e1e1e1;border:1px solid #adadad;box-sizing:border-box;"></div>
<div style="left:333px;top:584px;width:125px;height:24px;background:#e1e1e1;border:1px solid #adadad;box-sizing:border-box;"></div>
<div style="left:462px;top:584px;width:147px;height:24px;background:#e1e1e1;border:1px solid #adadad;box-sizing:border-box;"></div>
<div style="left:611px;top:583px;width:1px;height:26px;background:#000;"></div>
<div style="left:615px;top:584px;width:23px;height:24px;background:#e1e1e1;border:1px solid #adadad;box-sizing:border-box;"></div>
<div style="left:643px;top:584px;width:23px;height:24px;background:#cccccc;border:1px solid #bfbfbf;box-sizing:border-box;"></div>
<div style="left:671px;top:584px;width:88px;height:24px;background:#e1e1e1;border:1px solid #adadad;box-sizing:border-box;"></div>
<svg style="left:620px;top:591px;" width="13" height="9" viewBox="0 0 13 9"><path d="M1 8 L6.5 1.5 L12 8 Z" fill="#222"/></svg>
<svg style="left:648.5px;top:591px;" width="13" height="9" viewBox="0 0 13 9"><path d="M1 1.5 L6.5 8 L12 1.5 Z" fill="#777"/></svg>
<svg style="left:201px;top:587px;" width="18" height="18" viewBox="0 0 18 18"><path d="M3.5 0.5 V6.5 M0.5 3.5 H6.5" stroke="#2e8b57" stroke-width="1.6"/><path d="M15 3 V16 M12.6 13.4 L15 16 L17.4 13.4" fill="none" stroke="#333" stroke-width="1.1"/><text x="7" y="10" font-size="7.5" font-weight="bold" fill="#2f6fbd" font-family="Liberation Sans,sans-serif">А</text><text x="7" y="17.5" font-size="7.5" font-weight="bold" fill="#8b4aa8" font-family="Liberation Sans,sans-serif">Я</text></svg>
<span class="t" style="font-size:12px;color:#000;left:221px;transform:scaleX(0.9766);transform-origin:0 50%;top:587.0px;line-height:18px;height:18px;">Доб<u>а</u>вить уровень</span>
<svg style="left:341px;top:589px;" width="16" height="14" viewBox="0 0 16 14"><path d="M1 1 L14 13 M14 1 L1 13" stroke="#222" stroke-width="2.1"/></svg>
<span class="t" style="font-size:12px;color:#000;left:360px;transform:scaleX(0.9453);transform-origin:0 50%;top:587.0px;line-height:18px;height:18px;"><u>У</u>далить уровень</span>
<svg style="left:470px;top:589px;" width="16" height="14" viewBox="0 0 16 14"><rect x="0.5" y="0.5" width="7" height="9" fill="#fff" stroke="#444" stroke-width=".9"/><path d="M2 3 H6 M2 5 H6 M2 7 H6" stroke="#444" stroke-width=".7"/><rect x="6.5" y="3.5" width="8" height="10" fill="#fff" stroke="#444" stroke-width=".9"/><path d="M8.2 6 H12.8 M8.2 8 H12.8 M8.2 10 H12.8" stroke="#444" stroke-width=".7"/></svg>
<span class="t" style="font-size:12px;color:#000;left:489px;transform:scaleX(0.9827);transform-origin:0 50%;top:587.0px;line-height:18px;height:18px;"><u>К</u>опировать уровень</span>
<span class="t" style="font-size:12px;color:#000;left:680px;transform:scaleX(0.9463);transform-origin:0 50%;top:587.0px;line-height:18px;height:18px;"><u>П</u>араметры...</span>
<div style="left:769px;top:589px;width:13px;height:13px;background:#fff;border:1px solid #333;box-sizing:border-box;"></div>
<svg style="left:770px;top:590px;" width="12" height="12" viewBox="0 0 12 12"><path d="M2 6 L4.8 8.8 L9.6 2.6" fill="none" stroke="#111" stroke-width="1.2"/></svg>
<span class="t" style="font-size:12px;color:#000;left:789px;transform:scaleX(0.9760);transform-origin:0 50%;top:587.0px;line-height:18px;height:18px;">Мои данные содержат <u>з</u>аголовки</span>
<div style="left:193px;top:612px;width:777px;height:167px;background:#fff;border:1px solid #828282;box-sizing:border-box;"></div>
<div style="left:194px;top:613px;width:775px;height:21px;background:#fff;"></div>
<div style="left:455px;top:614px;width:1px;height:20px;background:#e5e5e5;"></div>
<div style="left:716px;top:614px;width:1px;height:20px;background:#e5e5e5;"></div>
<div style="left:966px;top:614px;width:1px;height:20px;background:#e5e5e5;"></div>
<span class="t" style="font-size:12px;color:#000;left:199px;transform:scaleX(0.9429);transform-origin:0 50%;top:615.0px;line-height:18px;height:18px;">Столбец</span>
<span class="t" style="font-size:12px;color:#000;left:460px;transform:scaleX(0.9870);transform-origin:0 50%;top:615.0px;line-height:18px;height:18px;">Сортировка</span>
<span class="t" style="font-size:12px;color:#000;left:721px;transform:scaleX(0.9733);transform-origin:0 50%;top:615.0px;line-height:18px;height:18px;">Порядок</span>
<span class="t" style="font-size:12px;color:#000;left:197px;transform:scaleX(0.9750);transform-origin:0 50%;top:634.0px;line-height:18px;height:18px;">Сортировать по</span>
<div style="left:294px;top:635px;width:152px;height:21px;background:#fff;border:1px solid #adadad;box-sizing:border-box;"></div>
<div style="left:295px;top:636px;width:150px;height:19px;background:#fff;border:1px solid #e3e3e3;box-sizing:border-box;"></div>
<div style="left:428px;top:637px;width:16px;height:17px;background:#e8e8e8;border:1px solid #adadad;box-sizing:border-box;"></div>
<svg style="left:431px;top:643.5px;" width="10" height="7" viewBox="0 0 10 7"><path d="M1 1 L5 5 L9 1" fill="none" stroke="#333" stroke-width="1.1"/></svg>
<span class="t" style="font-size:12px;color:#000;left:298px;transform:scaleX(0.9369);transform-origin:0 50%;top:636.5px;line-height:18px;height:18px;">Клиент</span>
<div style="left:456px;top:635px;width:251px;height:21px;background:#fff;border:1px solid #adadad;box-sizing:border-box;"></div>
<div style="left:457px;top:636px;width:249px;height:19px;background:#fff;border:1px solid #e3e3e3;box-sizing:border-box;"></div>
<div style="left:689px;top:637px;width:16px;height:17px;background:#e8e8e8;border:1px solid #adadad;box-sizing:border-box;"></div>
<svg style="left:692px;top:643.5px;" width="10" height="7" viewBox="0 0 10 7"><path d="M1 1 L5 5 L9 1" fill="none" stroke="#333" stroke-width="1.1"/></svg>
<span class="t" style="font-size:12px;color:#000;left:461px;transform:scaleX(0.9616);transform-origin:0 50%;top:636.5px;line-height:18px;height:18px;">Значения</span>
<div style="left:717px;top:635px;width:250px;height:21px;background:#fff;border:1px solid #adadad;box-sizing:border-box;"></div>
<div style="left:718px;top:636px;width:248px;height:19px;background:#fff;border:1px solid #e3e3e3;box-sizing:border-box;"></div>
<div style="left:949px;top:637px;width:16px;height:17px;background:#e8e8e8;border:1px solid #adadad;box-sizing:border-box;"></div>
<svg style="left:952px;top:643.5px;" width="10" height="7" viewBox="0 0 10 7"><path d="M1 1 L5 5 L9 1" fill="none" stroke="#333" stroke-width="1.1"/></svg>
<span class="t" style="font-size:12px;color:#000;left:722px;transform:scaleX(0.9062);transform-origin:0 50%;top:636.5px;line-height:18px;height:18px;">От А до Я</span>
<span class="t" style="font-size:12px;color:#000;left:197px;transform:scaleX(0.9316);transform-origin:0 50%;top:657.0px;line-height:18px;height:18px;">Затем по</span>
<div style="left:294px;top:658px;width:152px;height:21px;background:#fff;border:1px solid #adadad;box-sizing:border-box;"></div>
<div style="left:295px;top:659px;width:150px;height:19px;background:#fff;border:1px solid #e3e3e3;box-sizing:border-box;"></div>
<div style="left:428px;top:660px;width:16px;height:17px;background:#e8e8e8;border:1px solid #adadad;box-sizing:border-box;"></div>
<svg style="left:431px;top:666.5px;" width="10" height="7" viewBox="0 0 10 7"><path d="M1 1 L5 5 L9 1" fill="none" stroke="#333" stroke-width="1.1"/></svg>
<span class="t" style="font-size:12px;color:#000;left:298px;transform:scaleX(0.9017);transform-origin:0 50%;top:659.5px;line-height:18px;height:18px;">Сумма</span>
<div style="left:456px;top:658px;width:251px;height:21px;background:#fff;border:1px solid #adadad;box-sizing:border-box;"></div>
<div style="left:457px;top:659px;width:249px;height:19px;background:#fff;border:1px solid #e3e3e3;box-sizing:border-box;"></div>
<div style="left:689px;top:660px;width:16px;height:17px;background:#e8e8e8;border:1px solid #adadad;box-sizing:border-box;"></div>
<svg style="left:692px;top:666.5px;" width="10" height="7" viewBox="0 0 10 7"><path d="M1 1 L5 5 L9 1" fill="none" stroke="#333" stroke-width="1.1"/></svg>
<span class="t" style="font-size:12px;color:#000;left:461px;transform:scaleX(0.9616);transform-origin:0 50%;top:659.5px;line-height:18px;height:18px;">Значения</span>
<div style="left:717px;top:658px;width:250px;height:21px;background:#fff;border:1px solid #adadad;box-sizing:border-box;"></div>
<div style="left:718px;top:659px;width:248px;height:19px;background:#fff;border:1px solid #e3e3e3;box-sizing:border-box;"></div>
<div style="left:949px;top:660px;width:16px;height:17px;background:#e8e8e8;border:1px solid #adadad;box-sizing:border-box;"></div>
<svg style="left:952px;top:666.5px;" width="10" height="7" viewBox="0 0 10 7"><path d="M1 1 L5 5 L9 1" fill="none" stroke="#333" stroke-width="1.1"/></svg>
<span class="t" style="font-size:12px;color:#000;left:722px;transform:scaleX(0.9710);transform-origin:0 50%;top:659.5px;line-height:18px;height:18px;">По возрастанию</span>
<span class="t" style="font-size:12px;color:#000;left:197px;transform:scaleX(0.9316);transform-origin:0 50%;top:680.0px;line-height:18px;height:18px;">Затем по</span>
<div style="left:294px;top:681px;width:152px;height:21px;background:#fff;border:1px solid #adadad;box-sizing:border-box;"></div>
<div style="left:295px;top:682px;width:150px;height:19px;background:#fff;border:1px solid #e3e3e3;box-sizing:border-box;"></div>
<div style="left:428px;top:683px;width:16px;height:17px;background:#e8e8e8;border:1px solid #adadad;box-sizing:border-box;"></div>
<svg style="left:431px;top:689.5px;" width="10" height="7" viewBox="0 0 10 7"><path d="M1 1 L5 5 L9 1" fill="none" stroke="#333" stroke-width="1.1"/></svg>
<span class="t" style="font-size:12px;color:#000;left:298px;transform:scaleX(0.9066);transform-origin:0 50%;top:682.5px;line-height:18px;height:18px;">Страна</span>
<div style="left:456px;top:681px;width:251px;height:21px;background:#fff;border:1px solid #adadad;box-sizing:border-box;"></div>
<div style="left:457px;top:682px;width:249px;height:19px;background:#fff;border:1px solid #e3e3e3;box-sizing:border-box;"></div>
<div style="left:689px;top:683px;width:16px;height:17px;background:#e8e8e8;border:1px solid #adadad;box-sizing:border-box;"></div>
<svg style="left:692px;top:689.5px;" width="10" height="7" viewBox="0 0 10 7"><path d="M1 1 L5 5 L9 1" fill="none" stroke="#333" stroke-width="1.1"/></svg>
<span class="t" style="font-size:12px;color:#000;left:461px;transform:scaleX(0.9616);transform-origin:0 50%;top:682.5px;line-height:18px;height:18px;">Значения</span>
<div style="left:717px;top:681px;width:250px;height:21px;background:#fff;border:1px solid #adadad;box-sizing:border-box;"></div>
<div style="left:718px;top:682px;width:248px;height:19px;background:#fff;border:1px solid #e3e3e3;box-sizing:border-box;"></div>
<div style="left:949px;top:683px;width:16px;height:17px;background:#e8e8e8;border:1px solid #adadad;box-sizing:border-box;"></div>
<svg style="left:952px;top:689.5px;" width="10" height="7" viewBox="0 0 10 7"><path d="M1 1 L5 5 L9 1" fill="none" stroke="#333" stroke-width="1.1"/></svg>
<span class="t" style="font-size:12px;color:#000;left:722px;transform:scaleX(0.9062);transform-origin:0 50%;top:682.5px;line-height:18px;height:18px;">От А до Я</span>
<div style="left:195px;top:703px;width:772px;height:23px;background:#e1e1e8;"></div>
<span class="t" style="font-size:12px;color:#000;left:197px;transform:scaleX(0.9316);transform-origin:0 50%;top:703.0px;line-height:18px;height:18px;">Затем по</span>
<div style="left:294px;top:704px;width:152px;height:21px;background:#fff;border:1px solid #adadad;box-sizing:border-box;"></div>
<div style="left:295px;top:705px;width:150px;height:19px;background:#fff;border:1px solid #e3e3e3;box-sizing:border-box;"></div>
<div style="left:428px;top:706px;width:16px;height:17px;background:#e8e8e8;border:1px solid #adadad;box-sizing:border-box;"></div>
<svg style="left:431px;top:712.5px;" width="10" height="7" viewBox="0 0 10 7"><path d="M1 1 L5 5 L9 1" fill="none" stroke="#333" stroke-width="1.1"/></svg>
<div style="left:297px;top:707px;width:130px;height:15px;background:#99c9ef;"></div>
<div style="left:297px;top:707px;width:130px;height:15px;border:1px dotted #222;box-sizing:border-box;"></div>
<span class="t" style="font-size:12px;color:#000;left:298px;transform:scaleX(0.9785);transform-origin:0 50%;top:705.5px;line-height:18px;height:18px;">Дата</span>
<div style="left:456px;top:704px;width:251px;height:21px;background:#fff;border:1px solid #adadad;box-sizing:border-box;"></div>
<div style="left:457px;top:705px;width:249px;height:19px;background:#fff;border:1px solid #e3e3e3;box-sizing:border-box;"></div>
<div style="left:689px;top:706px;width:16px;height:17px;background:#e8e8e8;border:1px solid #adadad;box-sizing:border-box;"></div>
<svg style="left:692px;top:712.5px;" width="10" height="7" viewBox="0 0 10 7"><path d="M1 1 L5 5 L9 1" fill="none" stroke="#333" stroke-width="1.1"/></svg>
<span class="t" style="font-size:12px;color:#000;left:461px;transform:scaleX(0.9616);transform-origin:0 50%;top:705.5px;line-height:18px;height:18px;">Значения</span>
<div style="left:717px;top:704px;width:250px;height:21px;background:#fff;border:1px solid #adadad;box-sizing:border-box;"></div>
<div style="left:718px;top:705px;width:248px;height:19px;background:#fff;border:1px solid #e3e3e3;box-sizing:border-box;"></div>
<div style="left:949px;top:706px;width:16px;height:17px;background:#e8e8e8;border:1px solid #adadad;box-sizing:border-box;"></div>
<svg style="left:952px;top:712.5px;" width="10" height="7" viewBox="0 0 10 7"><path d="M1 1 L5 5 L9 1" fill="none" stroke="#333" stroke-width="1.1"/></svg>
<span class="t" style="font-size:12px;color:#000;left:722px;transform:scaleX(0.9531);transform-origin:0 50%;top:705.5px;line-height:18px;height:18px;">От старых к новым</span>
<div style="left:812px;top:783px;width:73px;height:21px;background:#e1e1e1;border:2px solid #0078d7;box-sizing:border-box;"></div>
<span class="t" style="font-size:12px;color:#000;left:841.4px;transform:scaleX(0.8594);transform-origin:0 50%;top:785.0px;line-height:18px;height:18px;">OK</span>
<div style="left:896px;top:783px;width:73px;height:21px;background:#e1e1e1;border:1px solid #adadad;box-sizing:border-box;"></div>
<span class="t" style="font-size:12px;color:#000;left:912.6px;transform:scaleX(0.9267);transform-origin:0 50%;top:785.0px;line-height:18px;height:18px;">Отмена</span>
<svg style="left:966px;top:802px;" width="10" height="10" viewBox="0 0 10 10"><g fill="#a0a0a0"><rect x="7" y="1" width="2" height="2"/><rect x="4" y="4" width="2" height="2"/><rect x="7" y="4" width="2" height="2"/><rect x="1" y="7" width="2" height="2"/><rect x="4" y="7" width="2" height="2"/><rect x="7" y="7" width="2" height="2"/></g></svg>
<svg style="left:4px;top:60px;" width="31" height="32" viewBox="0 0 31 32"><rect x="1" y="4" width="24" height="25" rx="1.5" fill="#e8ba66"/>
<path d="M6 8.2 V4.6 H10 V3.2 Q10 1.2 13 1.2 Q16 1.2 16 3.2 V4.6 H20 V8.2 Z" fill="#4a4a4a"/><rect x="11.6" y="2.6" width="2.8" height="1.8" fill="#e8ba66"/>
<path d="M15.5 12.8 H24.5 L28.5 16.8 V30.6 H15.5 Z" fill="#fff" stroke="#444" stroke-width="1"/><path d="M24.5 12.8 V16.8 H28.5" fill="none" stroke="#444" stroke-width="0.9"/></svg>
<span class="t" style="font-size:12px;color:#262626;left:-10.07px;transform:scaleX(0.9402);transform-origin:100% 50%;top:93.3px;line-height:18px;height:18px;">Вставить</span>
<svg style="left:15px;top:116px;" width="6" height="4" viewBox="0 0 6 4"><path d="M0 0 H5.4 L2.7 3 Z" fill="#444"/></svg>
<svg style="left:47px;top:59px;" width="16" height="16" viewBox="0 0 16 16"><path d="M3.6 0.8 L10.6 11 M12.4 0.8 L5.4 11" stroke="#444" stroke-width="1.6" fill="none"/>
<circle cx="3.6" cy="12.4" r="2.3" fill="none" stroke="#2b67a9" stroke-width="1.2"/><circle cx="12.4" cy="12.4" r="2.3" fill="none" stroke="#2b67a9" stroke-width="1.2"/></svg>
<svg style="left:46px;top:83px;" width="17" height="15" viewBox="0 0 17 15"><path d="M1 0.6 H6 L8.4 3 V9.6 H1 Z" fill="#fff" stroke="#444" stroke-width="0.9"/><path d="M2.6 3.6 H5 M2.6 5.4 H6.6 M2.6 7.2 H6.6" stroke="#2b67a9" stroke-width="0.8"/>
<path d="M7.6 4.2 H12.6 L15.2 6.8 V13.6 H7.6 Z" fill="#fff" stroke="#444" stroke-width="0.9"/><path d="M9.2 7.4 H11.6 M9.2 9.2 H13.4 M9.2 11 H13.4" stroke="#2b67a9" stroke-width="0.8"/></svg>
<svg style="left:68.7px;top:89px;" width="6" height="4" viewBox="0 0 6 4"><path d="M0 0 H5.4 L2.7 3 Z" fill="#444"/></svg>
<svg style="left:47px;top:105px;" width="17" height="16" viewBox="0 0 17 16"><path d="M0.6 6.6 L7.4 3.6 L10.4 8.2 L6.6 14.4 Z" fill="#e8ba66"/>
<path d="M6.6 2.8 L9.6 0.8 L14 7.4 L11 9.4 Z" fill="#4a4a4a" transform="translate(-0.4,1.2)"/>
<path d="M11.2 3.6 L14.4 0.6 L16.4 2.8 L13.2 5.6 Z" fill="#4a4a4a"/></svg>
<div style="left:90px;top:64px;width:111px;height:23px;background:#d2d2d2;border:1px solid #8c8c8c;box-sizing:border-box;"></div>
<div style="left:200px;top:64px;width:44px;height:23px;background:#d2d2d2;border:1px solid #8c8c8c;box-sizing:border-box;"></div>
<span class="t" style="font-size:12px;color:#262626;left:93.7px;transform:scaleX(0.9674);transform-origin:0 50%;top:66.6px;line-height:18px;height:18px;">Calibri</span>
<span class="t" style="font-size:12px;color:#262626;left:205px;transform:scaleX(0.9633);transform-origin:0 50%;top:66.6px;line-height:18px;height:18px;">11</span>
<svg style="left:191px;top:74.3px;" width="6" height="4" viewBox="0 0 6 4"><path d="M0 0 H5.4 L2.7 3 Z" fill="#444"/></svg>
<svg style="left:234px;top:74.3px;" width="6" height="4" viewBox="0 0 6 4"><path d="M0 0 H5.4 L2.7 3 Z" fill="#444"/></svg>
<span class="t" style="font-size:14px;color:#3b3b3b;left:250.5px;transform:scaleX(1.0174);transform-origin:0 50%;top:65.0px;line-height:21px;height:21px;">A</span>
<svg style="left:257.5px;top:67.5px;" width="6" height="4" viewBox="0 0 6 4"><path d="M0 3.4 H5.6 L2.8 0.2 Z" fill="#2b67a9"/></svg>
<span class="t" style="font-size:11px;color:#3b3b3b;left:273px;transform:scaleX(1.0222);transform-origin:0 50%;top:69.0px;line-height:16px;height:16px;">A</span>
<svg style="left:279px;top:67.5px;" width="6" height="4" viewBox="0 0 6 4"><path d="M0 0.4 H5.6 L2.8 3.6 Z" fill="#2b67a9"/></svg>
<span class="t" style="font-size:14px;color:#262626;font-weight:bold;left:94.7px;transform:scaleX(0.9958);transform-origin:0 50%;top:94.8px;line-height:21px;height:21px;">Ж</span>
<span class="t" style="font-size:14px;color:#262626;font-weight:bold;font-style:italic;left:118.3px;transform:scaleX(0.9644);transform-origin:0 50%;top:94.8px;line-height:21px;height:21px;">К</span>
<span class="t" style="font-size:14px;color:#262626;font-weight:bold;left:140.5px;transform:scaleX(0.8539);transform-origin:0 50%;top:94.8px;line-height:21px;height:21px;">Ч</span>
<div style="left:140px;top:111px;width:9.5px;height:1px;background:#262626;"></div>
<svg style="left:159px;top:105.3px;" width="6" height="4" viewBox="0 0 6 4"><path d="M0 0 H5.4 L2.7 3 Z" fill="#444"/></svg>
<div style="left:172px;top:95px;width:1px;height:21px;background:#9a9a9a;"></div>
<svg style="left:181px;top:98.6px;" width="14" height="14" viewBox="0 0 14 14"><rect x="0" y="0" width="13.4" height="13.2" fill="#fff"/><rect x="0.2" y="0.2" width="1" height="1" fill="#444"/><rect x="0.2" y="12" width="1" height="1" fill="#444"/><rect x="0.2" y="6" width="1" height="1" fill="#444"/><rect x="0.2" y="0.2" width="1" height="1" fill="#444"/><rect x="12.2" y="0.2" width="1" height="1" fill="#444"/><rect x="6.2" y="0.2" width="1" height="1" fill="#444"/><rect x="2.2" y="0.2" width="1" height="1" fill="#444"/><rect x="2.2" y="12" width="1" height="1" fill="#444"/><rect x="2.2" y="6" width="1" height="1" fill="#444"/><rect x="0.2" y="2.2" width="1" height="1" fill="#444"/><rect x="12.2" y="2.2" width="1" height="1" fill="#444"/><rect x="6.2" y="2.2" width="1" height="1" fill="#444"/><rect x="4.2" y="0.2" width="1" height="1" fill="#444"/><rect x="4.2" y="12" width="1" height="1" fill="#444"/><rect x="4.2" y="6" width="1" height="1" fill="#444"/><rect x="0.2" y="4.2" width="1" height="1" fill="#444"/><rect x="12.2" y="4.2" width="1" height="1" fill="#444"/><rect x="6.2" y="4.2" width="1" height="1" fill="#444"/><rect x="6.2" y="0.2" width="1" height="1" fill="#444"/><rect x="6.2" y="12" width="1" height="1" fill="#444"/><rect x="6.2" y="6" width="1" height="1" fill="#444"/><rect x="0.2" y="6.2" width="1" height="1" fill="#444"/><rect x="12.2" y="6.2" width="1" height="1" fill="#444"/><rect x="6.2" y="6.2" width="1" height="1" fill="#444"/><rect x="8.2" y="0.2" width="1" height="1" fill="#444"/><rect x="8.2" y="12" width="1" height="1" fill="#444"/><rect x="8.2" y="6" width="1" height="1" fill="#444"/><rect x="0.2" y="8.2" width="1" height="1" fill="#444"/><rect x="12.2" y="8.2" width="1" height="1" fill="#444"/><rect x="6.2" y="8.2" width="1" height="1" fill="#444"/><rect x="10.2" y="0.2" width="1" height="1" fill="#444"/><rect x="10.2" y="12" width="1" height="1" fill="#444"/><rect x="10.2" y="6" width="1" height="1" fill="#444"/><rect x="0.2" y="10.2" width="1" height="1" fill="#444"/><rect x="12.2" y="10.2" width="1" height="1" fill="#444"/><rect x="6.2" y="10.2" width="1" height="1" fill="#444"/><rect x="12.2" y="0.2" width="1" height="1" fill="#444"/><rect x="12.2" y="12" width="1" height="1" fill="#444"/><rect x="12.2" y="6" width="1" height="1" fill="#444"/><rect x="0.2" y="12.2" width="1" height="1" fill="#444"/><rect x="12.2" y="12.2" width="1" height="1" fill="#444"/><rect x="6.2" y="12.2" width="1" height="1" fill="#444"/></svg>
<svg style="left:202px;top:105.3px;" width="6" height="4" viewBox="0 0 6 4"><path d="M0 0 H5.4 L2.7 3 Z" fill="#444"/></svg>
<div style="left:215px;top:95px;width:1px;height:21px;background:#9a9a9a;"></div>
<svg style="left:223px;top:97px;" width="18" height="18" viewBox="0 0 18 18"><path d="M2.8 7.4 L8.6 2 L14.4 7.6 L8.4 12.6 Z" fill="#fff" stroke="#3b3b3b" stroke-width="1.3" stroke-linejoin="round"/>
<path d="M6.4 4.6 V1.8 Q6.4 0.5 7.6 0.5 Q8.8 0.5 8.8 1.8 V5.6" fill="none" stroke="#3b3b3b" stroke-width="1.1"/>
<path d="M13 4.8 Q17.4 6.4 15.8 11.4 Q14.6 8.8 12.2 8.8 Z" fill="#2b67a9"/>
<rect x="0" y="13" width="16.2" height="4" fill="#ffef00"/></svg>
<svg style="left:244.7px;top:105.3px;" width="6" height="4" viewBox="0 0 6 4"><path d="M0 0 H5.4 L2.7 3 Z" fill="#444"/></svg>
<span class="t" style="font-size:13px;color:#3b3b3b;left:260px;transform:scaleX(1.1994);transform-origin:0 50%;top:94.8px;line-height:20px;height:20px;">A</span>
<div style="left:257px;top:110px;width:16px;height:4px;background:#ee1111;"></div>
<svg style="left:279px;top:105.3px;" width="6" height="4" viewBox="0 0 6 4"><path d="M0 0 H5.4 L2.7 3 Z" fill="#444"/></svg>
<div style="left:341px;top:64px;width:22px;height:23px;background:#9b9b9b;"></div>
<div style="left:319px;top:95px;width:22px;height:23px;background:#9b9b9b;"></div>
<svg style="left:301px;top:66px;" width="14" height="9" viewBox="0 0 14 9"><rect x="0" y="1" width="14" height="1" fill="#444"/><rect x="0" y="4" width="14" height="1" fill="#444"/><rect x="0" y="7" width="14" height="1" fill="#444"/></svg>
<svg style="left:323px;top:70px;" width="14" height="9" viewBox="0 0 14 9"><rect x="0" y="1" width="14" height="1" fill="#444"/><rect x="0" y="4" width="14" height="1" fill="#444"/><rect x="0" y="7" width="14" height="1" fill="#444"/></svg>
<svg style="left:345px;top:75px;" width="14" height="9" viewBox="0 0 14 9"><rect x="0" y="1" width="14" height="1" fill="#444"/><rect x="0" y="4" width="14" height="1" fill="#444"/><rect x="0" y="7" width="14" height="1" fill="#444"/></svg>
<svg style="left:368px;top:66px;" width="19" height="18" viewBox="0 0 19 18"><text x="0" y="0" font-size="10.5" font-weight="bold" font-family="Liberation Sans,sans-serif" fill="#3b3b3b" transform="translate(2.6,12) rotate(-45) scale(0.9,1)">ab</text>
<path d="M7.4 16.6 L16.6 7.4 M13 6.8 H17.2 V11" fill="none" stroke="#3b3b3b" stroke-width="1.2"/></svg>
<svg style="left:389px;top:74px;" width="6" height="4" viewBox="0 0 6 4"><path d="M0 0 H5.4 L2.7 3 Z" fill="#444"/></svg>
<div style="left:414px;top:63px;width:1px;height:55px;background:#555;"></div>
<svg style="left:421px;top:66px;" width="18" height="17" viewBox="0 0 18 17"><rect x="1.5" y="1.5" width="9" height="4.6" fill="#fff" stroke="#444" stroke-width="1"/>
<rect x="1.5" y="8.5" width="9" height="6.6" fill="#fff" stroke="#444" stroke-width="1"/>
<path d="M3 3.8 H13.6 M3 10.8 H8.6 M3 12.8 H8.6" stroke="#2b67a9" stroke-width="1"/>
<path d="M13.6 3.8 Q16.6 3.8 16.6 7 Q16.6 10.6 11.4 10.6 M13.4 8.6 L11.2 10.6 L13.4 12.6" fill="none" stroke="#2b67a9" stroke-width="1"/></svg>
<svg style="left:301px;top:100px;" width="14" height="12" viewBox="0 0 14 12"><rect x="0" y="1" width="14" height="1" fill="#444"/><rect x="0" y="4" width="10" height="1" fill="#444"/><rect x="0" y="7" width="14" height="1" fill="#444"/><rect x="0" y="10" width="10" height="1" fill="#444"/></svg>
<svg style="left:323px;top:100px;" width="14" height="12" viewBox="0 0 14 12"><rect x="0" y="1" width="14" height="1" fill="#444"/><rect x="2" y="4" width="10" height="1" fill="#444"/><rect x="0" y="7" width="14" height="1" fill="#444"/><rect x="2" y="10" width="10" height="1" fill="#444"/></svg>
<svg style="left:345px;top:100px;" width="14" height="12" viewBox="0 0 14 12"><rect x="0" y="1" width="14" height="1" fill="#444"/><rect x="4" y="4" width="10" height="1" fill="#444"/><rect x="0" y="7" width="14" height="1" fill="#444"/><rect x="4" y="10" width="10" height="1" fill="#444"/></svg>
<svg style="left:369px;top:98px;" width="17" height="15" viewBox="0 0 17 15"><rect x="0" y="1" width="16" height="1" fill="#444"/><rect x="0" y="13" width="16" height="1" fill="#444"/><rect x="8" y="4" width="8" height="1" fill="#444"/><rect x="8" y="7" width="8" height="1" fill="#444"/><rect x="8" y="10" width="8" height="1" fill="#444"/><path d="M7 7.5 H1.4 M4 4.6 L1.2 7.5 L4 10.4" fill="none" stroke="#2b67a9" stroke-width="1.5"/></svg>
<svg style="left:391px;top:98px;" width="17" height="15" viewBox="0 0 17 15"><rect x="0" y="1" width="16" height="1" fill="#444"/><rect x="0" y="13" width="16" height="1" fill="#444"/><rect x="8" y="4" width="8" height="1" fill="#444"/><rect x="8" y="7" width="8" height="1" fill="#444"/><rect x="8" y="10" width="8" height="1" fill="#444"/><path d="M0.4 7.5 H6 M3.4 4.6 L6.2 7.5 L3.4 10.4" fill="none" stroke="#2b67a9" stroke-width="1.5"/></svg>
<svg style="left:421px;top:97px;" width="17" height="17" viewBox="0 0 17 17"><rect x="1.5" y="1.5" width="14" height="13.6" fill="#fff" stroke="#444" stroke-width="1.1"/>
<path d="M1.5 4.6 H15.5 M1.5 12 H15.5 M8.5 1.5 V4.6 M8.5 12 V15" stroke="#444" stroke-width="1"/>
<path d="M3.6 8.3 H13.4 M5.4 6.6 L3.6 8.3 L5.4 10 M11.6 6.6 L13.4 8.3 L11.6 10" fill="none" stroke="#2b67a9" stroke-width="0.9"/></svg>
<svg style="left:444px;top:105.3px;" width="6" height="4" viewBox="0 0 6 4"><path d="M0 0 H5.4 L2.7 3 Z" fill="#444"/></svg>
<div style="left:463px;top:56px;width:78px;height:23px;background:#d2d2d2;border:1px solid #8c8c8c;box-sizing:border-box;"></div>
<span class="t" style="font-size:12px;color:#262626;left:466.2px;transform:scaleX(1.0282);transform-origin:0 50%;top:59.0px;line-height:18px;height:18px;">Общий</span>
<svg style="left:530.6px;top:66.2px;" width="6" height="4" viewBox="0 0 6 4"><path d="M0 0 H5.4 L2.7 3 Z" fill="#444"/></svg>
<svg style="left:466px;top:81.6px;" width="17" height="17" viewBox="0 0 17 17"><rect x="0" y="0.4" width="16" height="9" fill="#2b67a9"/><path d="M1.6 2 H4 M12 2 H14.4 M1.6 7.8 H4 M12 7.8 H14.4" stroke="#fff" stroke-width="1"/><ellipse cx="8" cy="4.9" rx="3.2" ry="2.8" fill="#fff"/><circle cx="8" cy="4.9" r="1.5" fill="#2b67a9"/>
<g fill="#e8ba66"><ellipse cx="12.2" cy="7.4" rx="3.6" ry="1.1"/><ellipse cx="12.2" cy="9.4" rx="3.6" ry="1.1"/><ellipse cx="12.2" cy="11.4" rx="3.6" ry="1.1"/><ellipse cx="7.4" cy="12.4" rx="3.6" ry="1.1"/><ellipse cx="7.4" cy="14.4" rx="3.6" ry="1.1"/><ellipse cx="7.4" cy="16" rx="3.6" ry="1"/></g></svg>
<svg style="left:487.7px;top:89px;" width="6" height="4" viewBox="0 0 6 4"><path d="M0 0 H5.4 L2.7 3 Z" fill="#444"/></svg>
<span class="t" style="font-size:15px;color:#262626;left:502.2px;transform:scaleX(0.9522);transform-origin:0 50%;top:79.5px;line-height:22px;height:22px;">%</span>
<span class="t" style="font-size:10px;color:#262626;left:522.5px;transform:scaleX(0.8811);transform-origin:0 50%;top:82.3px;line-height:15px;height:15px;">000</span>
<svg style="left:466px;top:105px;" width="16" height="16" viewBox="0 0 16 16"><path d="M6 4 H0.8 M3 1.8 L0.8 4 L3 6.2" fill="none" stroke="#2b67a9" stroke-width="1.2"/>
<text x="9" y="7.4" font-size="9.4" font-family="Liberation Sans,sans-serif" fill="#262626">0</text><text x="1.2" y="14.4" font-size="9.4" font-family="Liberation Sans,sans-serif" fill="#262626">,00</text></svg>
<svg style="left:487.4px;top:105px;" width="16" height="16" viewBox="0 0 16 16"><path d="M0.4 11.4 H5.6 M3.4 9.2 L5.6 11.4 L3.4 13.6" fill="none" stroke="#2b67a9" stroke-width="1.2"/>
<text x="3.6" y="7.4" font-size="9.4" font-family="Liberation Sans,sans-serif" fill="#262626">,00</text><text x="6.4" y="14.4" font-size="9.4" font-family="Liberation Sans,sans-serif" fill="#262626">,0</text></svg>
<svg style="left:553px;top:59px;" width="17" height="17" viewBox="0 0 17 17"><rect x="0.5" y="0.5" width="13" height="12" fill="#fff" stroke="#555" stroke-width="0.9"/>
<rect x="0.5" y="0.5" width="6.5" height="3.6" fill="#c8472b"/><rect x="0.5" y="4.6" width="4.4" height="3.4" fill="#2b67a9"/><rect x="0.5" y="8.6" width="3.4" height="3.8" fill="#c8472b"/>
<path d="M7 0.5 V12.5 M0.5 4.4 H13.5 M0.5 8.4 H13.5" stroke="#555" stroke-width="0.7"/>
<rect x="7" y="7.4" width="9.4" height="9" fill="#fff" stroke="#333" stroke-width="1"/><path d="M9.2 10.8 H14.2 M9.2 13 H14.2 M13 9.4 L10.6 14.4" stroke="#222" stroke-width="0.9"/></svg>
<span class="t" style="font-size:12px;color:#262626;left:572.5px;transform:scaleX(0.9924);transform-origin:0 50%;top:58.9px;line-height:18px;height:18px;">Условное форматирование</span>
<svg style="left:727px;top:66.2px;" width="6" height="4" viewBox="0 0 6 4"><path d="M0 0 H5.4 L2.7 3 Z" fill="#444"/></svg>
<svg style="left:553px;top:82px;" width="17" height="17" viewBox="0 0 17 17"><rect x="0.5" y="0.5" width="13" height="11.5" fill="#d6e3f2" stroke="#444" stroke-width="1"/><rect x="0.5" y="0.5" width="13" height="3" fill="#fff" stroke="#444" stroke-width="1"/>
<path d="M3.8 0.5 V12 M7 0.5 V12 M10.2 0.5 V12 M0.5 6.4 H13.5 M0.5 9.2 H13.5" stroke="#666" stroke-width="0.7"/><path d="M11.6 10.2 L16 4.4" stroke="#b2b2b2" stroke-width="4.4"/><path d="M11.4 10.4 L16 4.2" stroke="#3b3b3b" stroke-width="2.6"/><path d="M10.2 9.2 Q12.8 9.6 12.6 12.2 Q11.8 15.6 4 16.8 Q7 14.8 7 12 Q7.4 9.2 10.2 9.2 Z" fill="#2b67a9"/></svg>
<span class="t" style="font-size:12px;color:#262626;left:572.5px;transform:scaleX(0.9953);transform-origin:0 50%;top:81.7px;line-height:18px;height:18px;">Форматировать как таблицу</span>
<svg style="left:730.8px;top:89px;" width="6" height="4" viewBox="0 0 6 4"><path d="M0 0 H5.4 L2.7 3 Z" fill="#444"/></svg>
<svg style="left:553px;top:105px;" width="17" height="17" viewBox="0 0 17 17"><rect x="0.5" y="0.5" width="13" height="11.5" fill="#d6e3f2" stroke="#444" stroke-width="1"/><path d="M0.5 3.5 H13.5 M3.5 0.5 V12" stroke="#444" stroke-width="0.8"/><rect x="1" y="1" width="12" height="2" fill="#fff"/><rect x="1" y="3.9" width="2.1" height="7.6" fill="#fff"/><path d="M11.6 10.2 L16 4.4" stroke="#b2b2b2" stroke-width="4.4"/><path d="M11.4 10.4 L16 4.2" stroke="#3b3b3b" stroke-width="2.6"/><path d="M10.2 9.2 Q12.8 9.6 12.6 12.2 Q11.8 15.6 4 16.8 Q7 14.8 7 12 Q7.4 9.2 10.2 9.2 Z" fill="#2b67a9"/></svg>
<span class="t" style="font-size:12px;color:#262626;left:572.5px;transform:scaleX(0.9718);transform-origin:0 50%;top:105.0px;line-height:18px;height:18px;">Стили ячеек</span>
<svg style="left:643.3px;top:112.3px;" width="6" height="4" viewBox="0 0 6 4"><path d="M0 0 H5.4 L2.7 3 Z" fill="#444"/></svg>
<svg style="left:755px;top:58.6px;" width="17" height="17" viewBox="0 0 17 17"><rect x="1" y="0.6" width="4" height="3" fill="#fff" stroke="#444" stroke-width="0.9"/><rect x="5" y="0.6" width="4" height="3" fill="#fff" stroke="#444" stroke-width="0.9"/><rect x="1" y="8.6" width="4" height="3" fill="#fff" stroke="#444" stroke-width="0.9"/><rect x="5" y="8.6" width="4" height="3" fill="#fff" stroke="#444" stroke-width="0.9"/><rect x="1" y="12.4" width="4" height="3" fill="#fff" stroke="#444" stroke-width="0.9"/><rect x="5" y="12.4" width="4" height="3" fill="#fff" stroke="#444" stroke-width="0.9"/><rect x="8.6" y="5.2" width="3.6" height="2.6" fill="#cfe0f3" stroke="#444" stroke-width="0.8"/><rect x="12.2" y="5.2" width="3.6" height="2.6" fill="#cfe0f3" stroke="#444" stroke-width="0.8"/><path d="M7.4 6.5 H1 M3.4 4 L0.8 6.5 L3.4 9" fill="none" stroke="#2b67a9" stroke-width="1.3"/></svg>
<span class="t" style="font-size:12px;color:#262626;left:774.4px;transform:scaleX(0.9260);transform-origin:0 50%;top:58.6px;line-height:18px;height:18px;">Вставить</span>
<svg style="left:832px;top:66.2px;" width="6" height="4" viewBox="0 0 6 4"><path d="M0 0 H5.4 L2.7 3 Z" fill="#444"/></svg>
<svg style="left:755px;top:81.6px;" width="17" height="17" viewBox="0 0 17 17"><rect x="1" y="0.6" width="4" height="3" fill="#fff" stroke="#444" stroke-width="0.9"/><rect x="5" y="0.6" width="4" height="3" fill="#fff" stroke="#444" stroke-width="0.9"/><rect x="1" y="8.6" width="4" height="3" fill="#fff" stroke="#444" stroke-width="0.9"/><rect x="5" y="8.6" width="4" height="3" fill="#fff" stroke="#444" stroke-width="0.9"/><rect x="1" y="12.4" width="4" height="3" fill="#fff" stroke="#444" stroke-width="0.9"/><rect x="5" y="12.4" width="4" height="3" fill="#fff" stroke="#444" stroke-width="0.9"/><rect x="4" y="5" width="4" height="2.8" fill="#cfe0f3" stroke="#444" stroke-width="0.8"/><path d="M9.4 2.6 L15.6 8.8 M15.6 2.6 L9.4 8.8" stroke="#d4532b" stroke-width="1.4"/></svg>
<span class="t" style="font-size:12px;color:#262626;left:774.4px;transform:scaleX(0.9429);transform-origin:0 50%;top:81.7px;line-height:18px;height:18px;">Удалить</span>
<svg style="left:828px;top:89px;" width="6" height="4" viewBox="0 0 6 4"><path d="M0 0 H5.4 L2.7 3 Z" fill="#444"/></svg>
<svg style="left:755px;top:104.6px;" width="17" height="17" viewBox="0 0 17 17"><rect x="1.0" y="4.4" width="3.6" height="2.9" fill="#fff" stroke="#666" stroke-width="0.5"/><rect x="1.0" y="7.300000000000001" width="3.6" height="2.9" fill="#fff" stroke="#666" stroke-width="0.5"/><rect x="1.0" y="10.2" width="3.6" height="2.9" fill="#fff" stroke="#666" stroke-width="0.5"/><rect x="1.0" y="13.1" width="3.6" height="2.9" fill="#fff" stroke="#666" stroke-width="0.5"/><rect x="4.6" y="4.4" width="3.6" height="2.9" fill="#fff" stroke="#666" stroke-width="0.5"/><rect x="4.6" y="7.300000000000001" width="3.6" height="2.9" fill="#2b67a9" stroke="#666" stroke-width="0.5"/><rect x="4.6" y="10.2" width="3.6" height="2.9" fill="#fff" stroke="#666" stroke-width="0.5"/><rect x="4.6" y="13.1" width="3.6" height="2.9" fill="#fff" stroke="#666" stroke-width="0.5"/><rect x="8.2" y="4.4" width="3.6" height="2.9" fill="#fff" stroke="#666" stroke-width="0.5"/><rect x="8.2" y="7.300000000000001" width="3.6" height="2.9" fill="#fff" stroke="#666" stroke-width="0.5"/><rect x="8.2" y="10.2" width="3.6" height="2.9" fill="#fff" stroke="#666" stroke-width="0.5"/><rect x="8.2" y="13.1" width="3.6" height="2.9" fill="#fff" stroke="#666" stroke-width="0.5"/><rect x="11.8" y="4.4" width="3.6" height="2.9" fill="#fff" stroke="#666" stroke-width="0.5"/><rect x="11.8" y="7.300000000000001" width="3.6" height="2.9" fill="#fff" stroke="#666" stroke-width="0.5"/><rect x="11.8" y="10.2" width="3.6" height="2.9" fill="#fff" stroke="#666" stroke-width="0.5"/><rect x="11.8" y="13.1" width="3.6" height="2.9" fill="#fff" stroke="#666" stroke-width="0.5"/><rect x="1" y="4.4" width="14.4" height="11.6" fill="none" stroke="#444" stroke-width="1"/><path d="M0.6 0 V3 M15.6 0 V3 M1 1.5 H15.2 M3 0.2 L1.2 1.5 L3 2.8 M13.2 0.2 L15 1.5 L13.2 2.8" fill="none" stroke="#2b67a9" stroke-width="0.9"/></svg>
<span class="t" style="font-size:12px;color:#262626;left:774.4px;transform:scaleX(0.9970);transform-origin:0 50%;top:104.9px;line-height:18px;height:18px;">Формат</span>
<svg style="left:820px;top:112.3px;" width="6" height="4" viewBox="0 0 6 4"><path d="M0 0 H5.4 L2.7 3 Z" fill="#444"/></svg>
<svg style="left:854px;top:59px;" width="16" height="16" viewBox="0 0 16 16"><path d="M13.8 3.6 V1 H1.2 L7.6 7.6 L1.2 14 H14 V11.4" fill="none" stroke="#262626" stroke-width="1.9"/></svg>
<svg style="left:875.6px;top:66.2px;" width="6" height="4" viewBox="0 0 6 4"><path d="M0 0 H5.4 L2.7 3 Z" fill="#444"/></svg>
<svg style="left:855px;top:82px;" width="15" height="16" viewBox="0 0 15 16"><rect x="0.5" y="0.5" width="13" height="14.6" fill="#fff" stroke="#555" stroke-width="1"/><rect x="0" y="0" width="14" height="3" fill="#555"/><path d="M7 5 V12 M3.8 8.8 L7 12 L10.2 8.8" fill="none" stroke="#2b67a9" stroke-width="1.7"/></svg>
<svg style="left:873.6px;top:89px;" width="6" height="4" viewBox="0 0 6 4"><path d="M0 0 H5.4 L2.7 3 Z" fill="#444"/></svg>
<svg style="left:855px;top:105px;" width="15" height="15" viewBox="0 0 15 15"><path d="M1 8.6 L9 0.8 L13.4 4.6 L5.6 12.6 Z" fill="#e0697f"/><path d="M1 8.6 L3.4 6.2 L8 10.2 L5.6 12.6 Z" fill="#c9506a"/><path d="M5 13.6 H14" stroke="#444" stroke-width="1"/></svg>
<svg style="left:873.6px;top:112.3px;" width="6" height="4" viewBox="0 0 6 4"><path d="M0 0 H5.4 L2.7 3 Z" fill="#444"/></svg>
<svg style="left:904px;top:60px;" width="34" height="30" viewBox="0 0 34 30"><text x="0" y="0" font-size="14.5" font-weight="bold" font-family="Liberation Sans,sans-serif" fill="#2b67a9" transform="translate(2.2,13.4) scale(0.95,1)">А</text>
<text x="0" y="0" font-size="14.5" font-weight="bold" font-family="Liberation Sans,sans-serif" fill="#8e44ad" transform="translate(2.2,28) scale(0.95,1)">Я</text>
<path d="M14 9 H31.4 L24.6 15.6 H20.8 Z" fill="#555"/><path d="M20.9 15.2 L24.5 15.2 V23.4 L20.9 20.8 Z" fill="#fff" stroke="#555" stroke-width="1"/></svg>
<span class="t" style="font-size:12px;color:#262626;left:888.5px;transform:scaleX(0.9839);transform-origin:0 50%;top:93.1px;line-height:18px;height:18px;">Сортировка</span>
<span class="t" style="font-size:12px;color:#262626;left:892.8px;transform:scaleX(0.9687);transform-origin:0 50%;top:109.2px;line-height:18px;height:18px;">и фильтр</span>
<svg style="left:946px;top:116.7px;" width="6" height="4" viewBox="0 0 6 4"><path d="M0 0 H5.4 L2.7 3 Z" fill="#444"/></svg>
<svg style="left:973px;top:58px;" width="32" height="32" viewBox="0 0 32 32"><circle cx="18.8" cy="13.3" r="8.3" fill="#fff" stroke="#2b67a9" stroke-width="2.3"/><path d="M12.6 19.8 L4.4 27.8" stroke="#2b67a9" stroke-width="3.8" stroke-linecap="round"/></svg>
<span class="t" style="font-size:12px;color:#262626;left:967.3px;transform:scaleX(0.9801);transform-origin:0 50%;top:93.1px;line-height:18px;height:18px;">Найти и</span>
<span class="t" style="font-size:12px;color:#262626;left:959.4px;transform:scaleX(0.9548);transform-origin:0 50%;top:109.2px;line-height:18px;height:18px;">выделить</span>
<svg style="left:1013.6px;top:116.7px;" width="6" height="4" viewBox="0 0 6 4"><path d="M0 0 H5.4 L2.7 3 Z" fill="#444"/></svg>
</div></body></html>
